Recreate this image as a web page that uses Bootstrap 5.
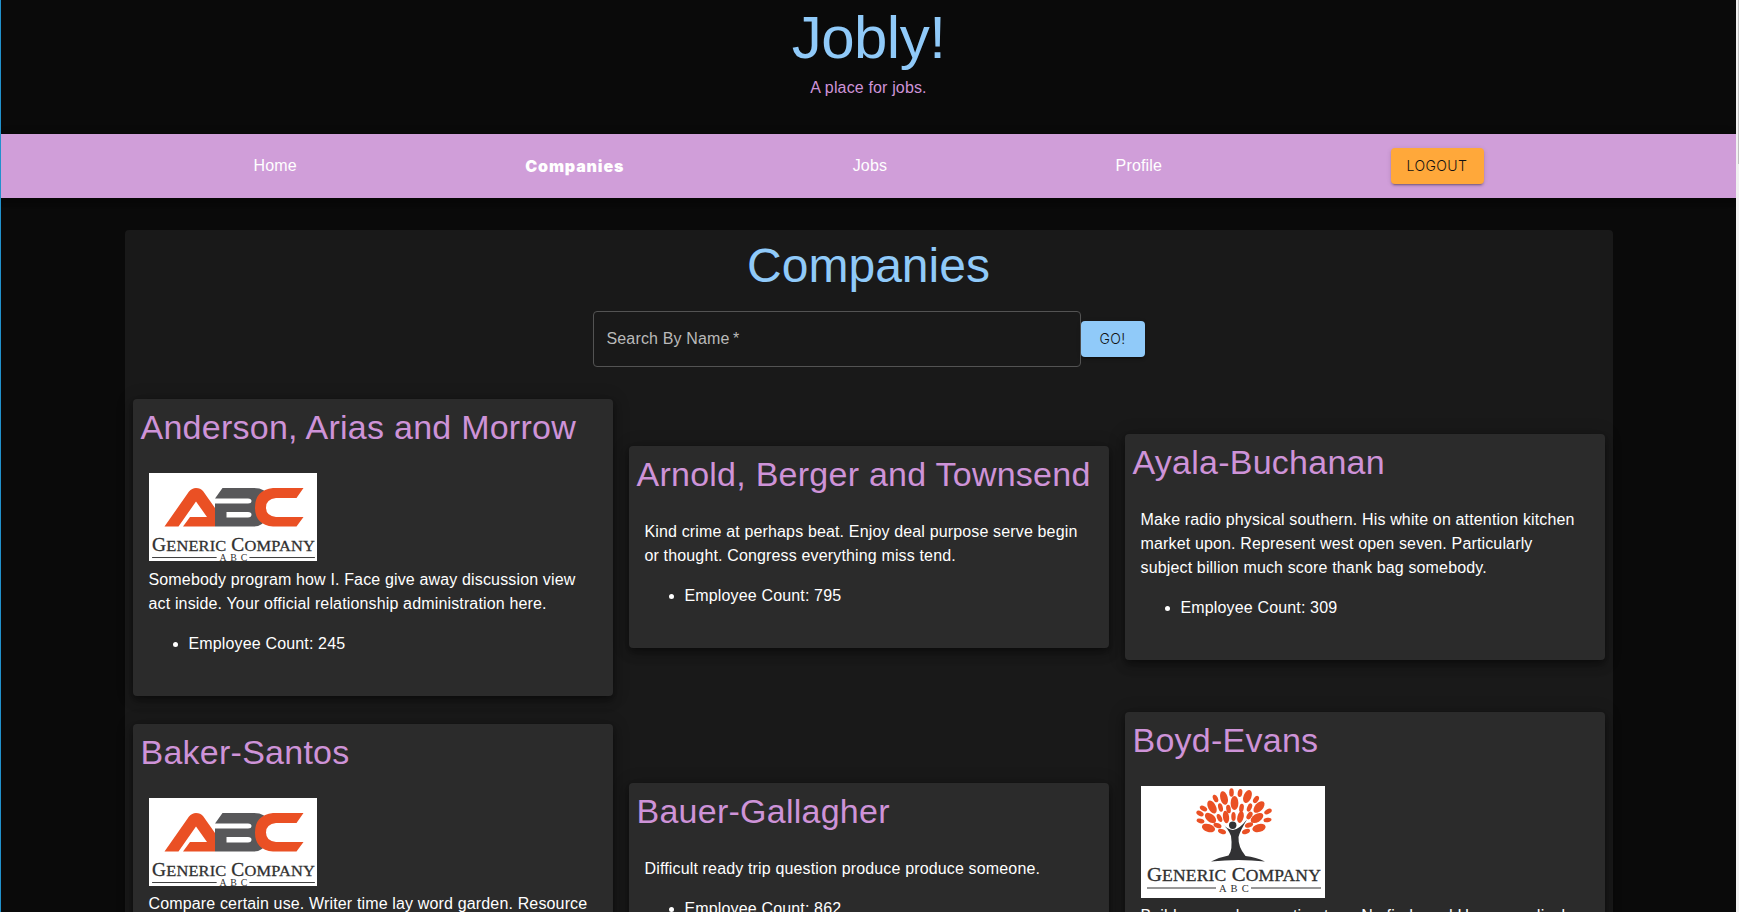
<!DOCTYPE html>
<html lang="en" data-bs-theme="dark">
<head>
<meta charset="utf-8">
<meta name="viewport" content="width=device-width, initial-scale=1">
<title>Jobly!</title>
<link href="https://cdn.jsdelivr.net/npm/bootstrap@5.3.0/dist/css/bootstrap.min.css" rel="stylesheet">
<style>
html, body { height: 100%; overflow: hidden; }
body { font-family: "Liberation Sans", Arial, sans-serif; background: #0a0a0a; color: #fff; letter-spacing: .00938em; border-left: 1px solid #2191cc; }
.page-view { width: 1735px; height: 912px; overflow: hidden; }
.scroll-track { width: 3px; height: 912px; background: #f1f1f1; padding-left: 2px; }
.scroll-thumb { height: 164px; background: #c1c1c1; }
.site-title { font-size: 60px; line-height: 72px; letter-spacing: -.00833em; font-weight: 400; color: #90caf9; padding-top: 2px; }
.site-tag { color: #ce93d8; height: 60px; padding-top: 2px; }
.main-bar { height: 64px; background: #d09ed9; box-shadow: 0 2px 4px -1px rgba(0,0,0,.2), 0 4px 5px rgba(0,0,0,.14), 0 1px 10px rgba(0,0,0,.12); }
.main-bar .nav-link { color: #fff; padding: 0; }
.main-bar .nav-link.active { font-family: Inter, sans-serif; font-weight: 900; letter-spacing: .85px; }
.btn-flat { font-family: Inter, sans-serif; font-weight: 300; font-size: 14px; line-height: 24px; letter-spacing: .02857em; text-transform: uppercase; padding: 6px 0; border: 0; border-radius: 4px; color: #111; box-shadow: 0 3px 1px -2px rgba(0,0,0,.2), 0 2px 2px rgba(0,0,0,.14), 0 1px 5px rgba(0,0,0,.12); }
.btn-logout { background: #ffa83a; width: 93px; }
.btn-go { background: #90caf9; width: 64px; }
.panel { width: 1488px; background: #191919; border-radius: 4px; padding: 0 8px; margin: 32px auto 0; }
.panel-title { font-size: 48px; line-height: 56px; font-weight: 400; color: #90caf9; padding-top: 8px; margin: 0 0 17px; letter-spacing: 0; }
.search-box { width: 488px; height: 56px; background: transparent; border: 1px solid #535353; border-radius: 4px; padding: 0 13px; color: #fff; letter-spacing: .00938em; }
.search-box::placeholder { color: #bababa; opacity: 1; }
.company-grid { display: grid; grid-template-columns: repeat(3, 480px); gap: 16px; align-items: center; margin-top: 32px; }
.company { background: #2b2b2b; border-radius: 4px; padding: 8px 8px 24px; box-shadow: 0 3px 5px -1px rgba(0,0,0,.2), 0 6px 10px rgba(0,0,0,.28), 0 1px 18px rgba(0,0,0,.2); }
.company h2 { font-size: 34px; line-height: 40px; font-weight: 400; letter-spacing: .00735em; color: #ce93d8; margin: 0 0 26px; white-space: nowrap; }
.company svg { display: block; margin-bottom: 6.5px; }
.company ul { padding-left: 40px; }
</style>
</head>
<body>
<svg class="d-none" aria-hidden="true">
  <symbol id="wordmark" viewBox="0 0 174 28">
    <g fill="#303030" font-family="Liberation Serif, serif" stroke="#303030" stroke-width=".3">
      <text x="0" y="15.500" font-size="19.500" textLength="174" lengthAdjust="spacingAndGlyphs">G<tspan font-size="16.500">ENERIC</tspan> C<tspan font-size="16.500">OMPANY</tspan></text>
      <text x="72" y="26.500" font-size="10.500" stroke="none" textLength="30">A B C</text>
      <path d="M0 23h69M104 23h70" stroke-width="1"/>
    </g>
  </symbol>
  <symbol id="logo-abc" viewBox="0 0 168 88">
    <rect width="168" height="88" fill="#fff"/>
    <path d="M15.500 53.500 40 18.500Q43 15 47 15Q51.500 15 54 18L66 35V53.500H34L41 44H58L47 28.500 29.500 53.500Z" fill="#ea5024"/>
    <path d="M73.500 15H105Q117 15 119 24Q119 30 112 34Q119 38 117 45Q114 53.500 105 53.500H66V30.500H99Q102.500 30.500 102.500 28Q102.500 25.500 99 25.500H66ZM77.500 39V44.500H99Q102.500 44.500 102.500 41.500Q102.500 39 99 39Z" fill="#58585a" fill-rule="evenodd"/>
    <path d="M154.500 15 147.500 25H127Q117 26 117 34.500Q117 43 127 44H154.500L147.500 53.500H124Q106 52 106 34.500Q106 17 124 15Z" fill="#ea5024"/>
    <use href="#wordmark" x="3" y="63" width="163" height="26.200"/>
  </symbol>
  <symbol id="logo-tree" viewBox="0 0 184 112">
    <rect width="184" height="112" fill="#fff"/>
    <g fill="#ea5024">
      <ellipse cx="90.500" cy="6.500" rx="2.300" ry="4.300"/>
      <ellipse cx="99" cy="7" rx="2.300" ry="4" transform="rotate(10 99 7)"/>
      <ellipse cx="83" cy="12" rx="3.700" ry="7" transform="rotate(-15 83 12)"/>
      <ellipse cx="106.500" cy="10.500" rx="3.900" ry="6.800" transform="rotate(22 106.500 10.500)"/>
      <ellipse cx="74.500" cy="12.500" rx="2.400" ry="4" transform="rotate(-25 74.500 12.500)"/>
      <ellipse cx="115" cy="13.500" rx="2.400" ry="4" transform="rotate(35 115 13.500)"/>
      <ellipse cx="93.500" cy="17" rx="3.900" ry="7"/>
      <ellipse cx="71" cy="21" rx="3.900" ry="7" transform="rotate(-28 71 21)"/>
      <ellipse cx="118" cy="21" rx="4" ry="7" transform="rotate(42 118 21)"/>
      <ellipse cx="79.500" cy="21.500" rx="2.300" ry="4.300" transform="rotate(-14 79.500 21.500)"/>
      <ellipse cx="108.500" cy="21.500" rx="2.300" ry="4.300" transform="rotate(22 108.500 21.500)"/>
      <ellipse cx="87.500" cy="23" rx="2.300" ry="4.300" transform="rotate(-8 87.500 23)"/>
      <ellipse cx="100.500" cy="22" rx="2.300" ry="4.300" transform="rotate(8 100.500 22)"/>
      <ellipse cx="62.500" cy="22.500" rx="2.400" ry="4" transform="rotate(-58 62.500 22.500)"/>
      <ellipse cx="127" cy="25.500" rx="2.400" ry="4" transform="rotate(62 127 25.500)"/>
      <ellipse cx="59" cy="27.500" rx="2.400" ry="4" transform="rotate(-58 59 27.500)"/>
      <ellipse cx="69.500" cy="32" rx="4" ry="6.500" transform="rotate(-50 69.500 32)"/>
      <ellipse cx="116" cy="32" rx="4" ry="7" transform="rotate(58 116 32)"/>
      <ellipse cx="78.500" cy="32" rx="2.300" ry="4.300" transform="rotate(-25 78.500 32)"/>
      <ellipse cx="85" cy="31" rx="3.100" ry="6.200" transform="rotate(-8 85 31)"/>
      <ellipse cx="92.500" cy="30.500" rx="2.200" ry="4.500"/>
      <ellipse cx="99.500" cy="31" rx="3.100" ry="6" transform="rotate(14 99.500 31)"/>
      <ellipse cx="108.500" cy="29.500" rx="2.500" ry="4.200" transform="rotate(32 108.500 29.500)"/>
      <ellipse cx="59.500" cy="35" rx="2.200" ry="4" transform="rotate(-75 59.500 35)"/>
      <ellipse cx="126.500" cy="34" rx="2.200" ry="4" transform="rotate(80 126.500 34)"/>
      <ellipse cx="67.500" cy="42" rx="4" ry="6.800" transform="rotate(-72 67.500 42)"/>
      <ellipse cx="118" cy="42" rx="4" ry="6.800" transform="rotate(74 118 42)"/>
      <ellipse cx="76.500" cy="39.500" rx="2.300" ry="4.200" transform="rotate(-68 76.500 39.500)"/>
      <ellipse cx="108" cy="39" rx="2.300" ry="4.300" transform="rotate(68 108 39)"/>
      <ellipse cx="81" cy="45.500" rx="2.300" ry="4.200" transform="rotate(-68 81 45.500)"/>
      <ellipse cx="105" cy="45.500" rx="2.300" ry="4.200" transform="rotate(68 105 45.500)"/>
    </g>
    <g fill="#323234">
      <circle cx="91.700" cy="39.300" r="3.700"/>
      <path d="M80.500 37.500Q87 43.500 92 44Q98 43.500 106 33.500Q99 45 97.500 51Q97 61 104.500 70Q115 71 124 75.500Q98 72.500 70 75.500Q79 71 87.500 69.500Q92 64 90 50Q87 42 80.500 37.500Z"/>
    </g>
    <use href="#wordmark" x="6" y="79" width="174" height="28"/>
  </symbol>
</svg>

<div class="d-flex">
<div class="page-view flex-shrink-0">
  <header class="text-center">
    <h1 class="site-title m-0">Jobly!</h1>
    <div class="site-tag">A place for jobs.</div>
  </header>
  <nav class="main-bar navbar p-0">
    <div class="d-flex w-100 px-4 justify-content-evenly align-items-center">
      <a class="nav-link" href="#">Home</a>
      <a class="nav-link active" href="#">Companies</a>
      <a class="nav-link" href="#">Jobs</a>
      <a class="nav-link" href="#">Profile</a>
      <button class="btn btn-flat btn-logout" type="button">Logout</button>
    </div>
  </nav>

  <main class="panel">
    <h2 class="panel-title text-center">Companies</h2>
    <form class="d-flex justify-content-center align-items-center">
      <input class="search-box" type="text" placeholder="Search By Name&#8201;*" aria-label="Search By Name">
      <button class="btn btn-flat btn-go" type="button">Go!</button>
    </form>
    <div class="company-grid">
      <article class="company">
        <h2>Anderson, Arias and Morrow</h2>
        <div class="px-2">
          <svg width="168" height="88"><use href="#logo-abc"/></svg>
          <p>Somebody program how I. Face give away discussion view act inside. Your official relationship administration here.</p>
          <ul><li>Employee Count: 245</li></ul>
        </div>
      </article>
      <article class="company">
        <h2>Arnold, Berger and Townsend</h2>
        <div class="px-2">
          <p>Kind crime at perhaps beat. Enjoy deal purpose serve begin or thought. Congress everything miss tend.</p>
          <ul><li>Employee Count: 795</li></ul>
        </div>
      </article>
      <article class="company">
        <h2>Ayala-Buchanan</h2>
        <div class="px-2">
          <p>Make radio physical southern. His white on attention kitchen market upon. Represent west open seven. Particularly subject billion much score thank bag somebody.</p>
          <ul><li>Employee Count: 309</li></ul>
        </div>
      </article>
      <article class="company">
        <h2>Baker-Santos</h2>
        <div class="px-2">
          <svg width="168" height="88"><use href="#logo-abc"/></svg>
          <p>Compare certain use. Writer time lay word garden. Resource<br><br><br></p>
          <ul><li>&nbsp;</li></ul>
        </div>
      </article>
      <article class="company">
        <h2>Bauer-Gallagher</h2>
        <div class="px-2">
          <p>Difficult ready trip question produce produce someone.</p>
          <ul><li>Employee Count: 862</li><li>&nbsp;</li></ul>
        </div>
      </article>
      <article class="company">
        <h2>Boyd-Evans</h2>
        <div class="px-2">
          <svg width="184" height="112"><use href="#logo-tree"/></svg>
          <p>Build research execution tree. No find word House medical<br><br><br></p>
          <ul><li>&nbsp;</li></ul>
        </div>
      </article>
    </div>
  </main>
</div>
<div class="scroll-track flex-shrink-0"><div class="scroll-thumb"></div></div>
</div>
<script src="https://cdn.jsdelivr.net/npm/bootstrap@5.3.0/dist/js/bootstrap.bundle.min.js"></script>
</body>
</html>
